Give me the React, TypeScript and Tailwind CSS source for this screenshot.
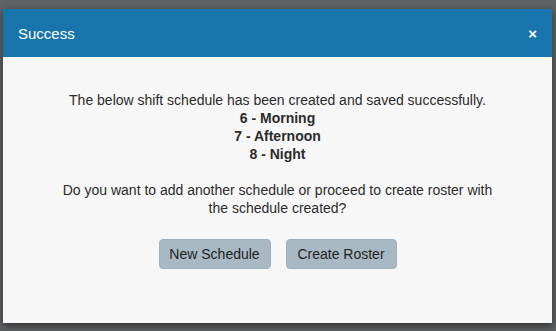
const SHIFTS = ["6 - Morning", "7 - Afternoon", "8 - Night"];

export default function App() {
  return (
    <div
      className="h-[331px] w-[556px] overflow-hidden bg-[#5f6163] pl-[3px] pt-[9px]"
      style={{ fontFamily: '"Liberation Sans", Arial, sans-serif' }}
    >
      <div className="w-[549px] shadow-[0_3px_8px_rgba(0,0,0,0.5)]">
        <div className="flex h-[48px] items-center justify-between bg-[#1874ad] pl-[15px] pr-[15px] text-white">
          <h4 className="text-[15px] leading-none">Success</h4>
          <button className="text-[15px] font-bold leading-none">×</button>
        </div>
        <div className="flex h-[266px] flex-col items-center bg-[#f7f7f7] pt-[34px] text-center text-[14px] leading-[18px] text-[#2b2b2b]">
          <p>The below shift schedule has been created and saved successfully.</p>
          {SHIFTS.map((s) => (
            <p key={s} className="font-bold">
              {s}
            </p>
          ))}
          <p className="mt-[18px]">
            Do you want to add another schedule or proceed to create roster with
            <br />
            the schedule created?
          </p>
          <div className="mt-[22px] flex gap-[15px]">
            <button className="h-[30px] w-[112px] rounded-[4px] border border-[#9fb1bd] bg-[#a8b9c4] text-[14px] text-[#1f1f1f]">
              New Schedule
            </button>
            <button className="h-[30px] w-[111px] rounded-[4px] border border-[#9fb1bd] bg-[#a8b9c4] text-[14px] text-[#1f1f1f]">
              Create Roster
            </button>
          </div>
        </div>
      </div>
    </div>
  );
}
